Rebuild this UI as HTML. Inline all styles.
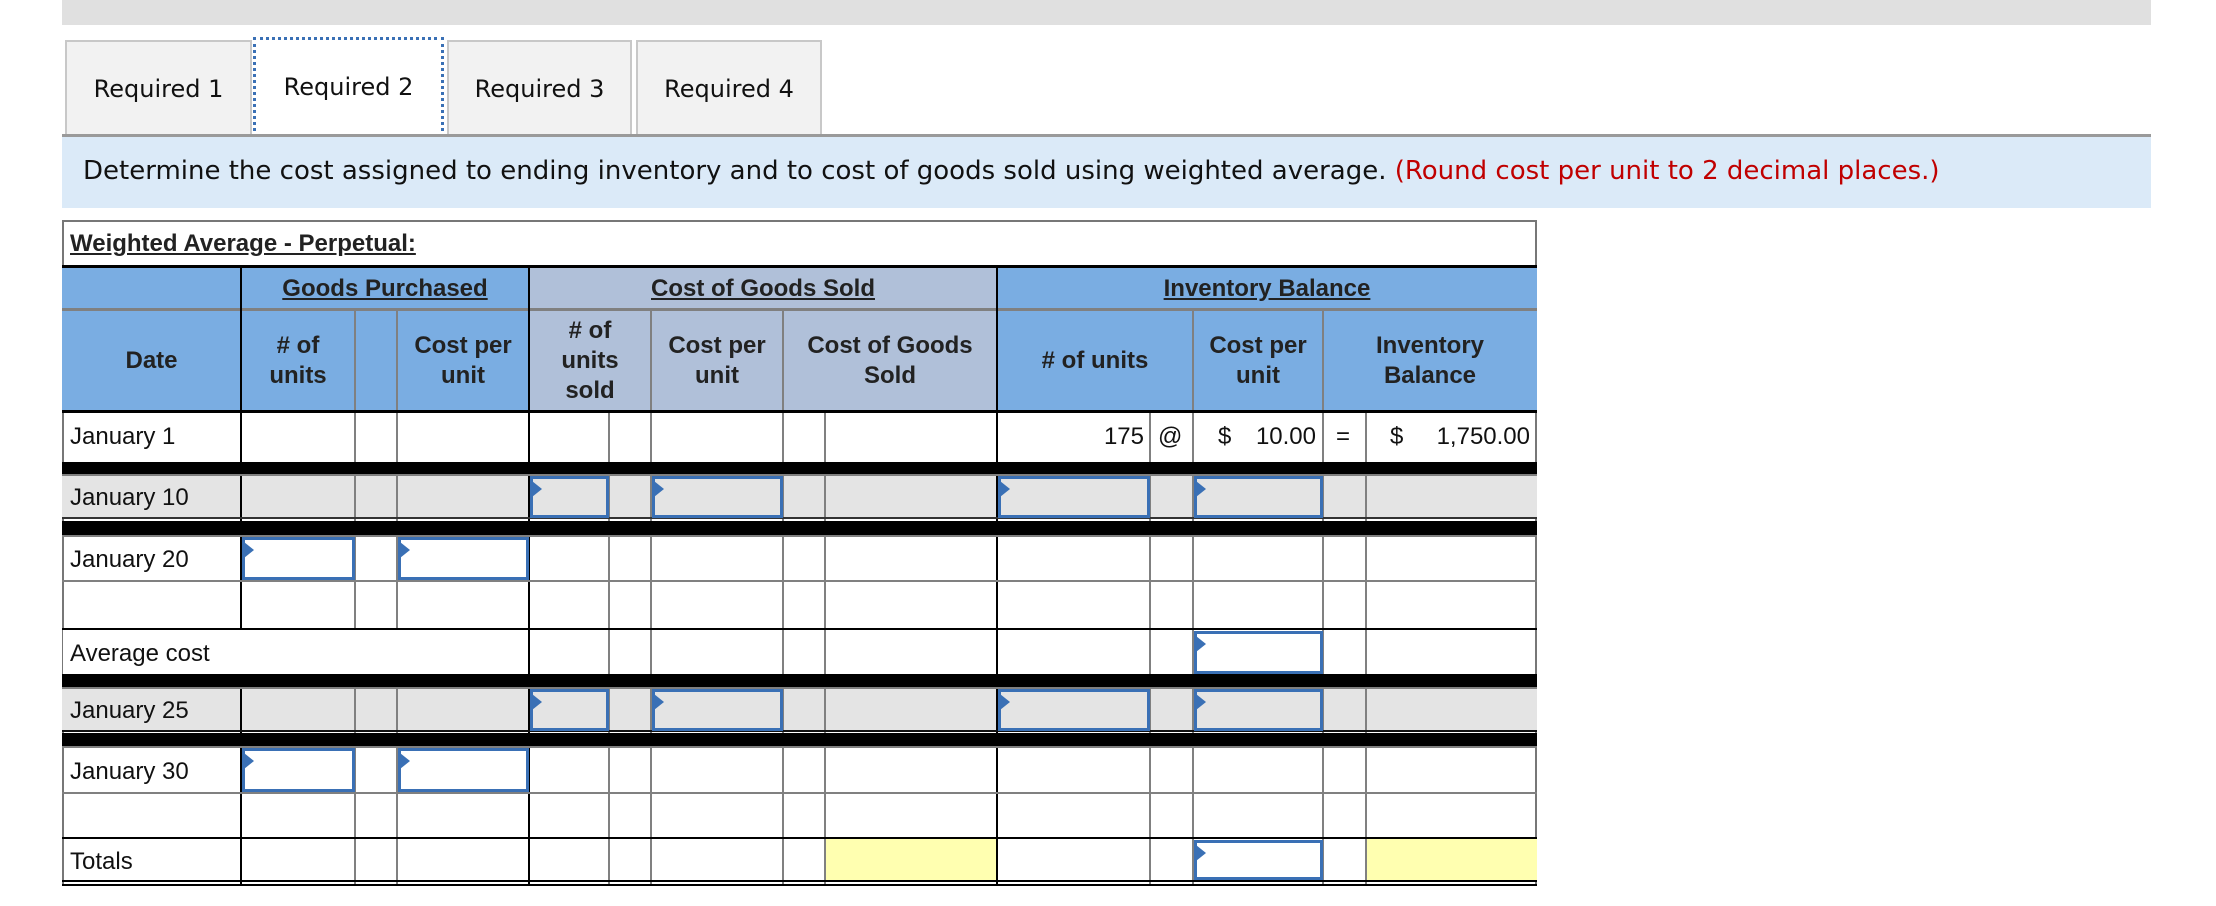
<!DOCTYPE html>
<html><head><meta charset="utf-8"><style>
*{margin:0;padding:0;box-sizing:border-box}
body{width:2216px;height:906px;background:#fff;position:relative;overflow:hidden;font-family:"Liberation Sans",Arial,sans-serif;color:#222}
div{position:absolute}
.tab{top:40px;height:96px;background:#f2f2f2;border:2px solid #c8c8c8;border-bottom:none;font-family:"DejaVu Sans","Liberation Sans",sans-serif;font-size:24px;color:#111;display:flex;align-items:center;justify-content:center}
.v{width:2px;background:#808080}
.vb{width:2px;background:#000}
.h{height:2px;background:#808080;left:62px;width:1475px}
.hb{background:#000;left:62px;width:1475px}
.ht{font-weight:bold;font-size:24px;display:flex;align-items:center;justify-content:center;text-align:center;line-height:30px;color:#222}
.u{text-decoration:underline}
.lbl{left:70px;font-size:24px;color:#111}
.in{border:3px solid #3a70b5;}
.in:before{content:"";position:absolute;left:-1px;top:2px;border-left:10px solid #3a70b5;border-top:8px solid transparent;border-bottom:8px solid transparent}
.d{font-size:24px;color:#111}
</style></head><body>
<div style="left:62px;top:0;width:2089px;height:25px;background:#e0e0e0"></div>
<div class="tab" style="left:65px;width:187px">Required 1</div>
<div class="tab" style="left:253px;top:37px;height:100px;width:191px;background:#fff;border:3px dotted #3a70b5">Required 2</div>
<div class="tab" style="left:447px;width:185px">Required 3</div>
<div class="tab" style="left:636px;width:186px">Required 4</div>
<div style="left:62px;top:134px;width:2089px;height:3px;background:#9a9a9a"></div>
<div style="left:62px;top:137px;width:2089px;height:71px;background:#dbeaf8"></div>
<div style="left:83px;top:156px;font-family:'DejaVu Sans','Liberation Sans',sans-serif;font-size:26px;color:#111;white-space:nowrap">Determine the cost assigned to ending inventory and to cost of goods sold using weighted average. <span style="color:#c00000">(Round cost per unit to 2 decimal places.)</span></div>

<div style="left:62px;top:220px;width:1475px;height:666px;border:2px solid #777;border-bottom:none"></div>
<div style="left:70px;top:230px;font-weight:bold;font-size:24px;text-decoration:underline;color:#222">Weighted Average - Perpetual:</div>
<div style="left:62px;top:267px;width:467px;height:144px;background:#7aade2"></div>
<div style="left:529px;top:267px;width:468px;height:144px;background:#b0c0d9"></div>
<div style="left:997px;top:267px;width:540px;height:144px;background:#7aade2"></div>
<div style="left:62px;top:475px;width:1475px;height:43px;background:#e4e4e4"></div>
<div style="left:62px;top:688px;width:1475px;height:43px;background:#e4e4e4"></div>
<div style="left:825px;top:839px;width:172px;height:43px;background:#ffffb0"></div>
<div style="left:1366px;top:839px;width:171px;height:43px;background:#ffffb0"></div>

<div class="hb" style="top:265px;height:3px"></div>
<div class="h" style="top:308px;height:3px"></div>
<div class="vb" style="left:240px;top:267px;height:618px"></div>
<div class="vb" style="left:528px;top:267px;height:618px"></div>
<div class="vb" style="left:996px;top:267px;height:618px"></div>
<div class="v" style="left:354px;top:309px;height:576px"></div>
<div class="v" style="left:396px;top:309px;height:576px"></div>
<div class="v" style="left:650px;top:309px;height:576px"></div>
<div class="v" style="left:782px;top:309px;height:576px"></div>
<div class="v" style="left:1192px;top:309px;height:576px"></div>
<div class="v" style="left:1322px;top:309px;height:576px"></div>
<div class="v" style="left:608px;top:411px;height:474px"></div>
<div class="v" style="left:824px;top:411px;height:474px"></div>
<div class="v" style="left:1149px;top:411px;height:474px"></div>
<div class="v" style="left:1365px;top:411px;height:474px"></div>
<div style="left:63px;top:630px;width:465px;height:44px;background:#fff"></div>
<div class="hb" style="top:410px;height:3px"></div>
<div class="hb" style="top:462px;height:12px"></div>
<div class="h" style="top:474px"></div>
<div class="h" style="top:517px;background:#333"></div>
<div class="hb" style="top:521px;height:14px"></div>
<div class="h" style="top:535px"></div>
<div class="h" style="top:580px"></div>
<div class="hb" style="top:628px;height:2px"></div>
<div class="hb" style="top:674px;height:13px"></div>
<div class="h" style="top:687px"></div>
<div class="h" style="top:730px;background:#111"></div>
<div class="hb" style="top:733px;height:13px"></div>
<div class="h" style="top:746px"></div>
<div class="h" style="top:792px"></div>
<div class="hb" style="top:837px;height:2px"></div>
<div class="hb" style="top:880px;height:2px"></div>
<div class="hb" style="top:884px;height:2px"></div>

<div class="ht" style="left:241px;top:268px;width:288px;height:41px"><span class="u">Goods Purchased</span></div>
<div class="ht" style="left:529px;top:268px;width:468px;height:41px"><span class="u">Cost of Goods Sold</span></div>
<div class="ht" style="left:997px;top:268px;width:540px;height:41px"><span class="u">Inventory Balance</span></div>
<div class="ht" style="left:62px;top:311px;width:179px;height:100px">Date</div>
<div class="ht" style="left:241px;top:311px;width:114px;height:100px">#&nbsp;of<br>units</div>
<div class="ht" style="left:397px;top:311px;width:132px;height:100px">Cost per<br>unit</div>
<div class="ht" style="left:529px;top:311px;width:122px;height:100px">#&nbsp;of<br>units<br>sold</div>
<div class="ht" style="left:651px;top:311px;width:132px;height:100px">Cost per<br>unit</div>
<div class="ht" style="left:783px;top:311px;width:214px;height:100px">Cost of Goods<br>Sold</div>
<div class="ht" style="left:997px;top:311px;width:196px;height:100px"># of units</div>
<div class="ht" style="left:1193px;top:311px;width:130px;height:100px">Cost per<br>unit</div>
<div class="ht" style="left:1323px;top:311px;width:214px;height:100px">Inventory<br>Balance</div>

<div class="lbl" style="top:423px">January 1</div>
<div class="lbl" style="top:484px">January 10</div>
<div class="lbl" style="top:546px">January 20</div>
<div class="lbl" style="top:640px">Average cost</div>
<div class="lbl" style="top:697px">January 25</div>
<div class="lbl" style="top:758px">January 30</div>
<div class="lbl" style="top:848px">Totals</div>

<div class="d" style="left:1060px;top:423px;width:84px;text-align:right">175</div>
<div class="d" style="left:1158px;top:423px">@</div>
<div class="d" style="left:1218px;top:423px">$</div>
<div class="d" style="left:1240px;top:423px;width:76px;text-align:right">10.00</div>
<div class="d" style="left:1336px;top:423px">=</div>
<div class="d" style="left:1390px;top:423px">$</div>
<div class="d" style="left:1410px;top:423px;width:120px;text-align:right">1,750.00</div>

<div class="in" style="left:530px;top:476px;width:79px;height:42px;background:#e4e4e4"></div>
<div class="in" style="left:652px;top:476px;width:131px;height:42px;background:#e4e4e4"></div>
<div class="in" style="left:998px;top:476px;width:152px;height:42px;background:#e4e4e4"></div>
<div class="in" style="left:1194px;top:476px;width:129px;height:42px;background:#e4e4e4"></div>
<div class="in" style="left:242px;top:537px;width:113px;height:43px;background:#fff"></div>
<div class="in" style="left:398px;top:537px;width:131px;height:43px;background:#fff"></div>
<div class="in" style="left:1194px;top:631px;width:129px;height:43px;background:#fff"></div>
<div class="in" style="left:530px;top:689px;width:79px;height:42px;background:#e4e4e4"></div>
<div class="in" style="left:652px;top:689px;width:131px;height:42px;background:#e4e4e4"></div>
<div class="in" style="left:998px;top:689px;width:152px;height:42px;background:#e4e4e4"></div>
<div class="in" style="left:1194px;top:689px;width:129px;height:42px;background:#e4e4e4"></div>
<div class="in" style="left:242px;top:748px;width:113px;height:44px;background:#fff"></div>
<div class="in" style="left:398px;top:748px;width:131px;height:44px;background:#fff"></div>
<div class="in" style="left:1194px;top:840px;width:129px;height:40px;background:#fff"></div>
</body></html>
